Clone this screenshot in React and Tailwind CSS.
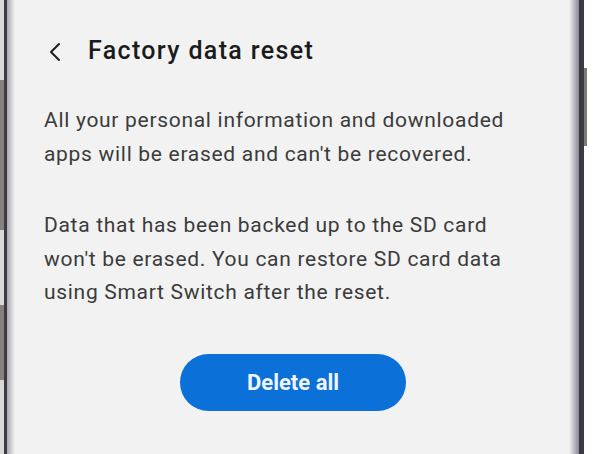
export default function App() {
  return (
    <div className="w-[600px] h-[454px] overflow-hidden flex bg-white" style={{ fontFamily: "Roboto, 'Noto Sans', sans-serif" }}>
      {/* left frame strip */}
      <div className="w-[4px] h-full flex flex-col bg-[#d9d8d6]">
        <div className="h-[80px]" />
        <div className="h-[150px] bg-[#85817c]" />
        <div className="h-[75px]" />
        <div className="h-[75px] bg-[#85817c]" />
      </div>
      <div className="w-[3px] h-full bg-[#3b3a45]" />
      {/* screen */}
      <div className="relative w-[572px] h-full bg-[#f2f2f2]">
        <div className="absolute inset-y-0 left-0 w-[8px] bg-gradient-to-r from-[#a9a7b4] to-[#f2f2f2]" />
        <div className="absolute inset-y-0 right-0 w-[10px] bg-gradient-to-l from-[#8c8a96] to-[#f2f2f2]" />
        <div className="relative flex flex-col pl-[37px] pr-[10px]">
          <div className="flex items-center pt-[36px] h-[66px]">
            <svg width="16" height="20" viewBox="0 0 16 20" className="ml-[3px] mt-[1px]">
              <polyline points="12,2 4,10 12,18" fill="none" stroke="#1c1c1c" strokeWidth="2" strokeLinecap="round" strokeLinejoin="round" />
            </svg>
            <div className="ml-[25px] text-[25px] leading-[30px] font-medium text-[#1b1b1b] tracking-[1.35px] whitespace-nowrap">Factory data reset</div>
          </div>
          <p className="mt-[38px] text-[21px] leading-[33.5px] text-[#3b3b3b] tracking-[0.7px] whitespace-nowrap">
            All your personal information and downloaded<br />apps will be erased and can't be recovered.
          </p>
          <p className="mt-[38px] text-[21px] leading-[33.5px] text-[#3b3b3b] tracking-[0.7px] whitespace-nowrap">
            Data that has been backed up to the SD card<br />won't be erased. You can restore SD card data<br />using Smart Switch after the reset.
          </p>
          <div className="mt-[44px] ml-[136px] w-[226px] h-[57px] rounded-full bg-[#0b70d7] flex items-center justify-center">
            <span className="text-[22px] font-bold text-[#eef5fd] mt-[1px]">Delete all</span>
          </div>
        </div>
      </div>
      <div className="w-[5px] h-full bg-[#3a3944]" />
      <div className="w-[3px] h-full flex flex-col bg-white">
        <div className="h-[68px]" />
        <div className="h-[78px] bg-[#7d7a78]" />
      </div>
      <div className="flex-1 h-full bg-white" />
    </div>
  );
}
